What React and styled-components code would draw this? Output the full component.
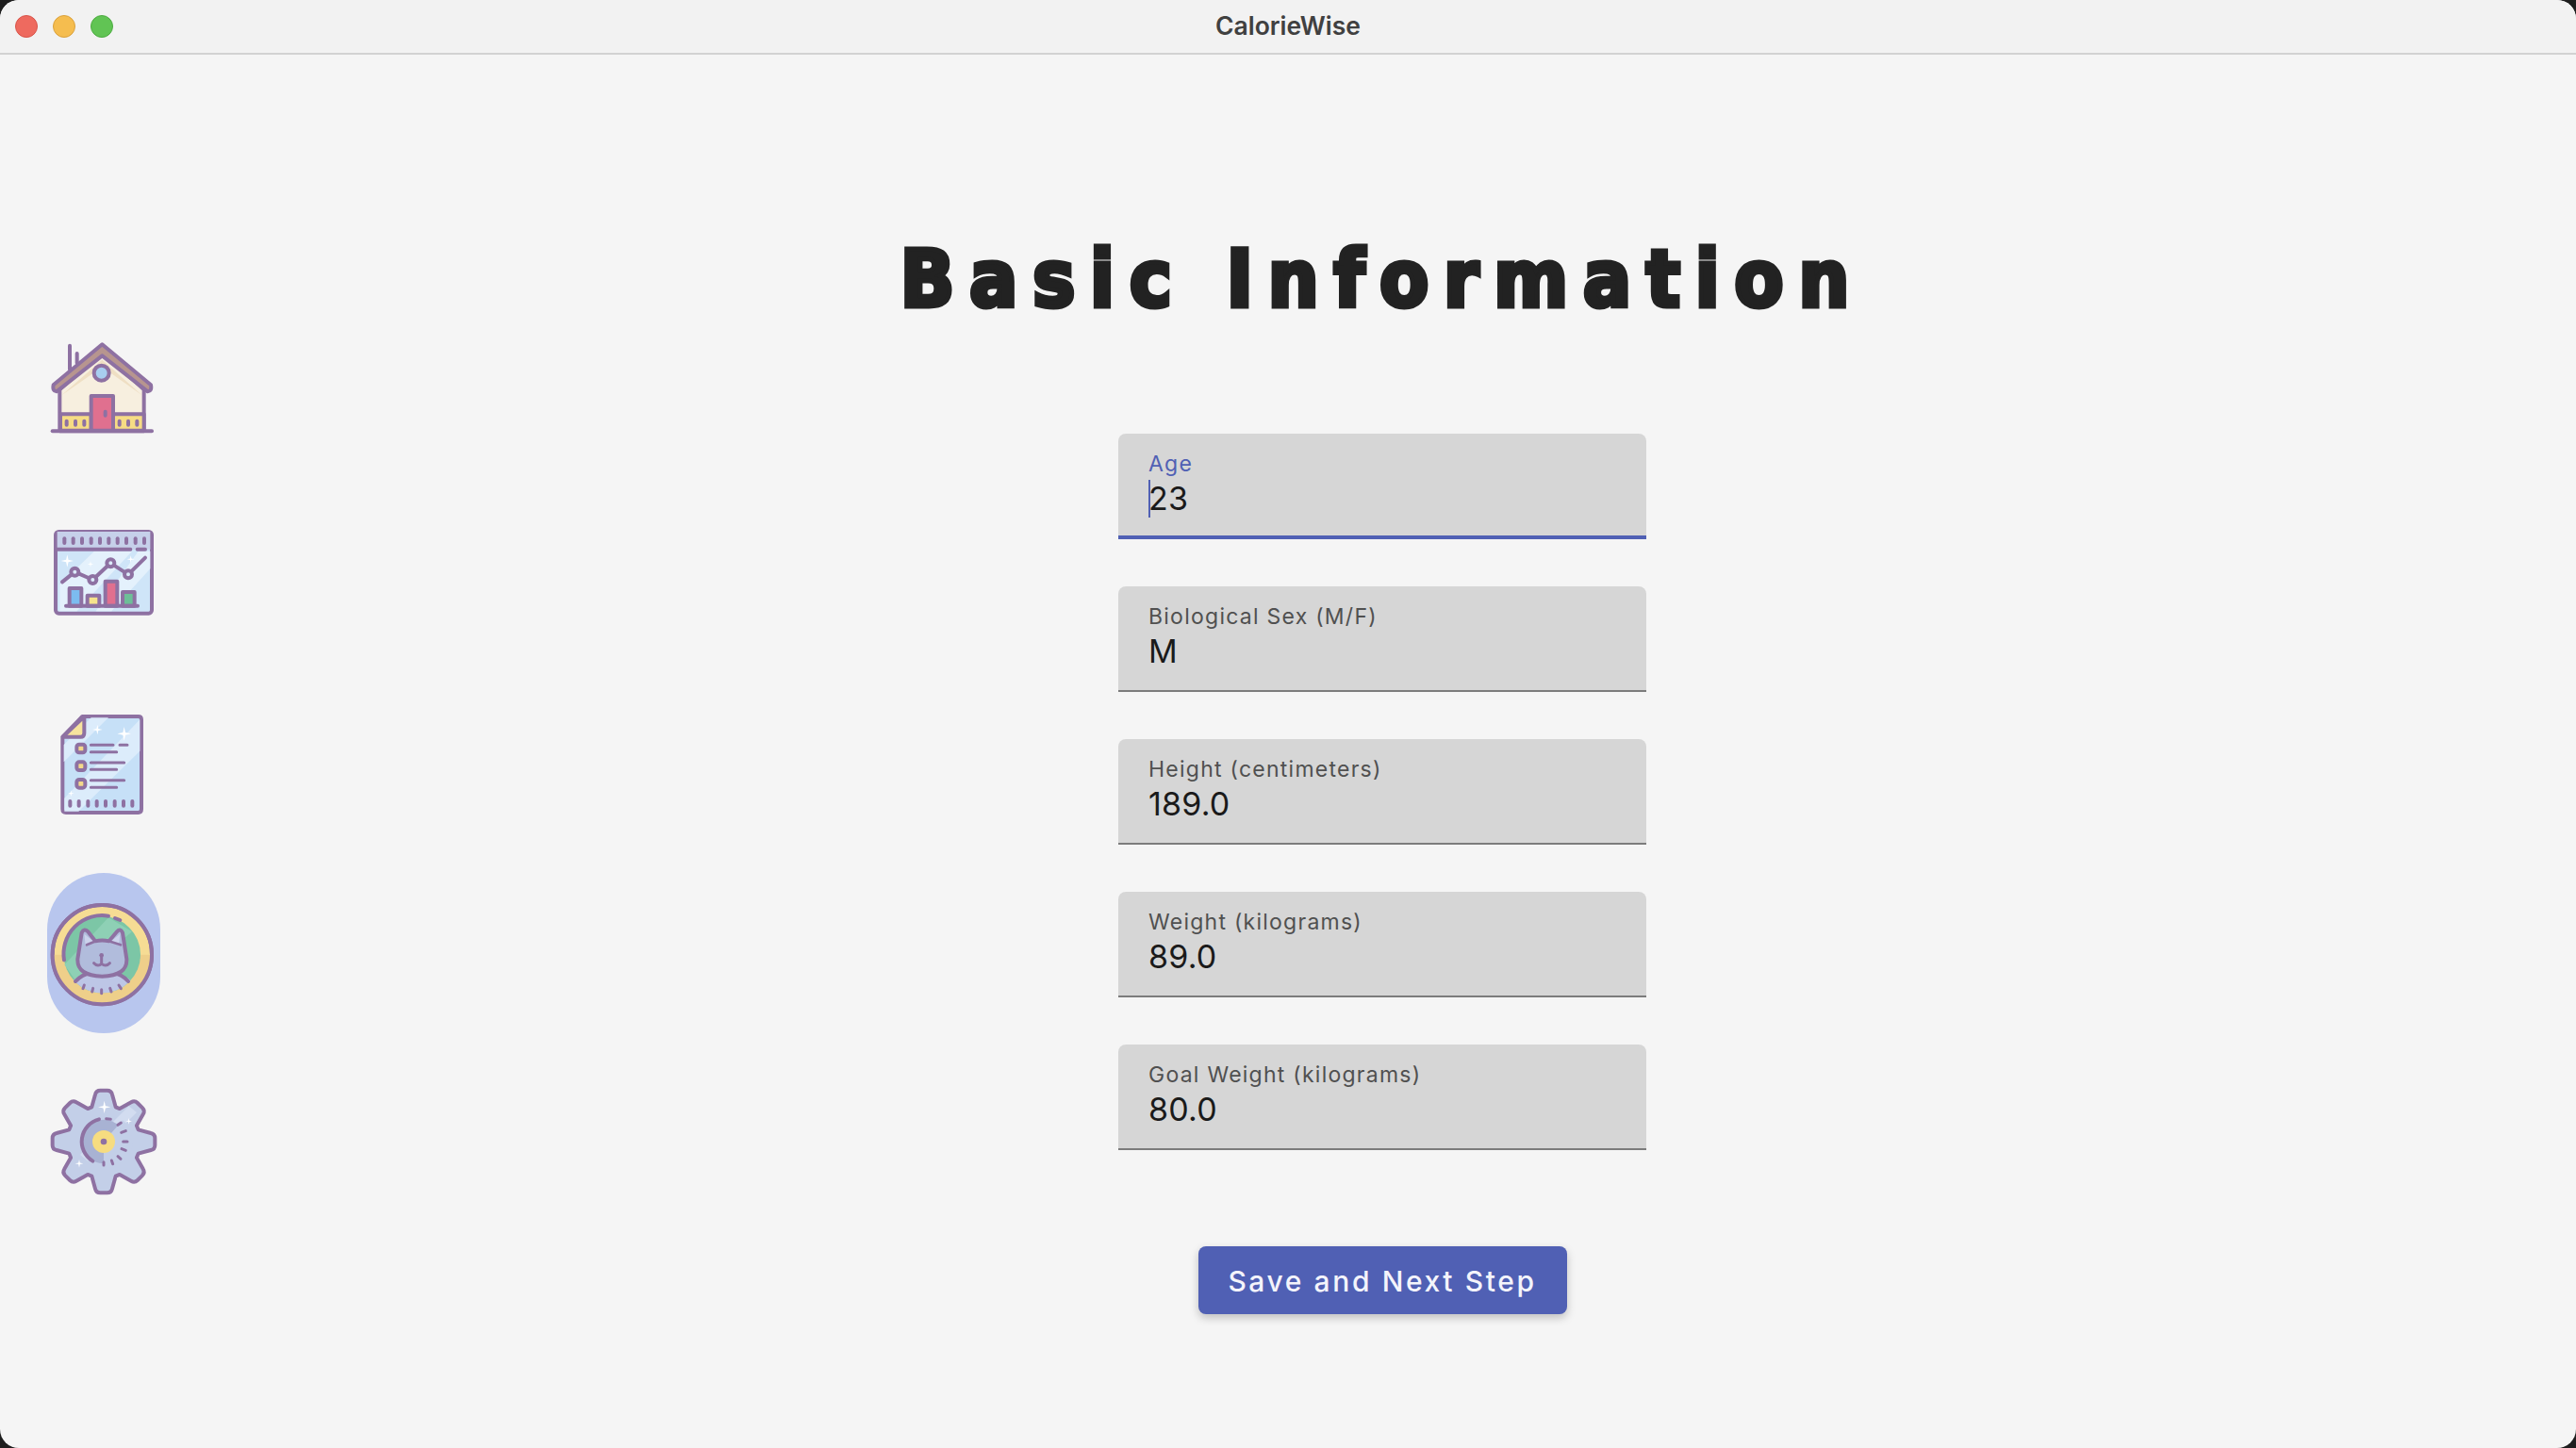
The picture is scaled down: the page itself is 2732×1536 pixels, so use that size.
import React from "react"
import styled, { createGlobalStyle } from "styled-components"

const Global = createGlobalStyle`
	html, body {
		margin: 0;
		padding: 0;
		background: #1e1e1e;
		overflow: hidden;
	}
`

const Window = styled.div`
	width: 2732px;
	height: 1536px;
	background: #f5f5f5;
	border-radius: 20px;
	overflow: hidden;
	display: flex;
	flex-direction: column;
	font-family: Inter, "Liberation Sans", sans-serif;
`

const TitleBar = styled.header`
	height: 53px;
	flex: none;
	padding-bottom: 3px;
	background: #f2f2f2;
	border-bottom: 2px solid #d2d2d2;
	display: flex;
	align-items: center;
	justify-content: center;
	position: relative;
	font-size: 26.5px;
	font-weight: 600;
	color: #404040;
`

const Lights = styled.div`
	position: absolute;
	left: 16px;
	top: 16px;
	display: flex;
	gap: 16px;
`

const Light = styled.span`
	width: 24px;
	height: 24px;
	border-radius: 50%;
	box-sizing: border-box;
	background: ${(p) => p.$color};
	border: 1px solid ${(p) => p.$edge};
`

const Body = styled.div`
	flex: 1;
	display: flex;
`

const Rail = styled.nav`
	width: 120px;
	margin: 0 30px 0 50px;
	padding-top: 268px;
	display: flex;
	flex-direction: column;
	gap: 30px;
`

const RailItem = styled.div`
	width: 120px;
	height: 170px;
	border-radius: 60px;
	display: flex;
	align-items: center;
	justify-content: center;
	background: ${(p) => (p.$active ? "#b8c6ee" : "transparent")};

	svg {
		filter: blur(0.7px);
	}
`

const Main = styled.main`
	flex: 1;
	display: flex;
	flex-direction: column;
	align-items: center;
`

const Title = styled.h1`
	margin: 188px 0 0;
	font-family: "DejaVu Sans Condensed", "DejaVu Sans", sans-serif;
	font-stretch: condensed;
	font-size: 84px;
	line-height: 100px;
	font-weight: 700;
	letter-spacing: 15.9px;
	white-space: nowrap;
	color: #222222;
	-webkit-text-stroke: 5px #222222;
`

const Form = styled.div`
	margin-top: 114px;
	display: flex;
	flex-direction: column;
	align-items: center;
	gap: 50px;
`

const Field = styled.div`
	width: 560px;
	height: 112px;
	box-sizing: border-box;
	padding: 18px 32px 0;
	background: #d6d6d6;
	border-radius: 8px 8px 0 0;
	border-bottom: ${(p) => (p.$focused ? "4px solid #5060b4" : "2px solid #7c7c7c")};
`

const Label = styled.div`
	font-size: 23px;
	line-height: 28px;
	letter-spacing: 1.25px;
	color: ${(p) => (p.$focused ? "#5060b4" : "#505050")};
`

const Value = styled.div`
	margin-top: 1px;
	font-size: 34px;
	line-height: 44px;
	letter-spacing: 0.2px;
	color: #1a1a1a;
`

const Caret = styled.span`
	display: inline-block;
	width: 2px;
	height: 40px;
	margin-right: -2px;
	vertical-align: -8px;
	background: #5060b4;
`

const SaveButton = styled.button`
	margin-top: 52px;
	width: 391px;
	height: 72px;
	padding: 2px 0 0;
	border: none;
	border-radius: 8px;
	background: #5060b4;
	color: #f4f4fb;
	font-family: Inter, "Liberation Sans", sans-serif;
	font-size: 30px;
	font-weight: 500;
	letter-spacing: 2.6px;
	box-shadow: 0 4px 10px rgba(0, 0, 0, 0.22);
`

const INK = "#8e71a2"

const Glyph = ({ box, children }) => (
	<svg
		width="120"
		height="120"
		viewBox={box}
		fill="none"
		stroke={INK}
		strokeWidth="12"
		strokeLinecap="round"
		strokeLinejoin="round"
	>
		{children}
	</svg>
)

const Sparkle = ({ x, y, r }) => {
	const k = r * 0.18
	return (
		<path
			d={`M${x},${y - r} L${x + k},${y - k} L${x + r},${y} L${x + k},${y + k} L${x},${y + r} L${x - k},${y + k} L${x - r},${y} L${x - k},${y - k} Z`}
			fill="#ffffff"
			stroke="none"
		/>
	)
}

const Ticks = ({ xs, y1, y2 }) => (
	<>
		{xs.map((x) => (
			<line key={x} x1={x} x2={x} y1={y1} y2={y2} />
		))}
	</>
)

const HouseIcon = () => (
	<Glyph box="150 33 360 360">
		<path d="M222,80 V155 M245,105 V135" />
		<path d="M190,220 L325,100 L458,220 V352 H190 Z" fill="#f7efdf" />
		<path d="M196,238 L325,125 L452,238 L325,148 Z" fill="#efdfc4" stroke="none" />
		<rect x="192" y="298" width="98" height="52" fill="#f6dc84" />
		<rect x="360" y="298" width="98" height="52" fill="#f6dc84" />
		<rect x="290" y="240" width="70" height="110" fill="#e0708f" />
		<line x1="335" x2="335" y1="290" y2="302" />
		<Ticks xs={[212, 240, 268, 380, 408, 436]} y1="320" y2="332" />
		<path
			d="M170,205 L325,76 L480,205 Q484,225 470,226 L325,112 L180,226 Q166,225 170,205 Z"
			fill="#b7958f"
		/>
		<circle cx="323" cy="167" r="24" fill="#a8cef0" />
		<line x1="167" x2="483" y1="352" y2="352" />
	</Glyph>
)

const ChartIcon = () => (
	<Glyph box="150 633 360 360">
		<rect x="177" y="672" width="306" height="260" rx="10" fill="#cfe5f8" />
		<path d="M182,728 H478 V672 H182 Z" fill="#c6d0ea" stroke="none" />
		<path d="M300,734 H420 L245,925 H190 V840 Z M440,734 H478 V790 L355,925 H305 Z" fill="#e4f1fc" stroke="none" />
		<Ticks xs={[205, 233, 261, 290, 318, 346, 374, 402, 431, 459]} y1="694" y2="708" />
		<path d="M180,728 H415 M437,728 H462" />
		<Sparkle x={214} y={765} r={20} />
		<Sparkle x={288} y={775} r={10} />
		<Sparkle x={416} y={760} r={12} />
		<path d="M198,832 L238,800 L295,825 L352,772 L408,808 L462,755" />
		<circle cx="238" cy="800" r="12" fill="#dcebfa" />
		<circle cx="295" cy="825" r="12" fill="#dcebfa" />
		<circle cx="352" cy="772" r="12" fill="#dcebfa" />
		<circle cx="408" cy="808" r="12" fill="#dcebfa" />
		<rect x="221" y="852" width="38" height="56" fill="#7cbcf0" />
		<rect x="278" y="875" width="38" height="33" fill="#f6e38c" />
		<rect x="335" y="830" width="38" height="78" fill="#e0708f" />
		<rect x="390" y="864" width="38" height="44" fill="#6dbf98" />
		<line x1="210" x2="438" y1="908" y2="908" />
	</Glyph>
)

const DocIcon = () => (
	<Glyph box="150 33 360 360">
		<path d="M199,125 L262,60 H440 Q450,60 450,70 V355 Q450,366 440,366 H210 Q199,366 199,355 Z" fill="#c6e0f7" />
		<path d="M290,64 H345 L203,205 V150 Z M445,70 V170 L250,362 H205 V320 Z" fill="#dcecfb" stroke="none" />
		<path d="M200,125 L268,60 V113 Q268,125 256,125 Z" fill="#f7e39e" />
		<Sparkle x={310} y={102} r={16} />
		<Sparkle x={395} y={115} r={22} />
		<Sparkle x={226} y={305} r={10} />
		<rect x="244" y="149" width="27" height="26" rx="8" fill="#f3d98a" />
		<rect x="244" y="205" width="27" height="26" rx="8" fill="#f3d98a" />
		<rect x="244" y="261" width="27" height="26" rx="8" fill="#f3d98a" />
		<path d="M289,151 H360 M381,151 H405 M289,173 H371 M289,207 H395 M289,229 H371 M289,263 H395 M289,286 H371" strokeWidth="9" />
		<Ticks xs={[223, 251, 280, 308, 336, 365, 393, 421]} y1="330" y2="344" />
	</Glyph>
)

const CatIcon = () => (
	<Glyph box="150 633 360 360">
		<defs>
			<clipPath id="badge">
				<circle cx="325" cy="818" r="122" />
			</clipPath>
		</defs>
		<circle cx="325" cy="818" r="158" fill="#f6dc94" />
		<path d="M167,818 H483 A158,158 0 0 1 167,818 Z" fill="#eecf8a" stroke="none" />
		<circle cx="325" cy="818" r="122" fill="#7cc6a6" stroke="none" />
		<path d="M345,700 L420,745 L240,900 L205,850 Z" fill="#8ed0b5" stroke="none" />
		<path d="M345,695 A122,122 0 0 0 204,835" />
		<path d="M366,702 L382,708" />
		<circle cx="325" cy="818" r="158" />
		<path d="M232,900 Q262,878 290,876 H360 Q388,878 416,900 V960 H232 Z" fill="#bdc6e6" stroke="none" clipPath="url(#badge)" />
		<path d="M240,903 Q262,880 290,876 M360,876 Q388,880 408,903" />
		<path
			d="M247,832 L260,748 Q267,733 280,745 L303,775 Q325,770 347,775 L372,745 Q383,733 390,748 L403,832 Q405,885 325,887 Q245,885 247,832 Z"
			fill="#b1bcdc"
		/>
		<path d="M268,752 L300,778 L272,788 Z M382,752 L350,778 L378,788 Z" fill="#ccd3ec" stroke="none" />
		<path d="M276,787 L305,775 M346,775 L384,787" strokeWidth="8" />
		<circle cx="323" cy="820" r="7" fill={INK} stroke="none" />
		<path d="M323,822 V845 M299,845 Q311,858 323,847 Q337,858 349,845" strokeWidth="9" />
		<path d="M268,915 L264,926 M296,925 L293,936 M323,929 V941 M350,925 L354,936 M378,915 L385,926" strokeWidth="9" />
	</Glyph>
)

// eight teeth, built from one tooth turned around the hub
const gearPath = () => {
	const turn = (u, v, a) => {
		const x = 240 + u * Math.cos(a) + v * Math.sin(a)
		const y = 243 + u * Math.sin(a) - v * Math.cos(a)
		return `${x.toFixed(1)},${y.toFixed(1)}`
	}
	let d = ""
	for (let i = 0; i < 8; i++) {
		const a = (i * Math.PI) / 4
		d += `${d ? "L" : "M"}${turn(-38, 110, a)} `
		d += `L${turn(-27, 150, a)} Q${turn(-24, 163, a)} ${turn(-11, 163, a)} `
		d += `L${turn(11, 163, a)} Q${turn(24, 163, a)} ${turn(27, 150, a)} `
		d += `L${turn(38, 110, a)} `
	}
	return d + "Z"
}

const GearIcon = () => (
	<Glyph box="60 63 360 360">
		<path d={gearPath()} fill="#c3cfe8" />
		<path d="M320,130 L345,150 L190,305 L165,285 Z" fill="#d2dcf0" stroke="none" />
		<Sparkle x={242} y={133} r={20} />
		<Sparkle x={320} y={178} r={10} />
		<Sparkle x={162} y={313} r={13} />
		<circle cx="240" cy="243" r="70" fill="#a8b2d3" stroke="none" />
		<path d="M300,175 A90,90 0 0 1 320,290 L240,318 L240,243 Z" fill="#c3cfe8" stroke="none" />
		<path d="M225,172 A73,73 0 0 0 205,305" />
		<path
			d="M248,170 L262,172 M285,190 L295,183 M296,214 L310,209 M302,243 L315,243 M297,266 L310,271 M285,290 L294,298 M265,303 L269,314 M240,308 V318"
			strokeWidth="9"
		/>
		<circle cx="240" cy="243" r="36" fill="#f6dc80" stroke="none" />
		<circle cx="240" cy="243" r="10" fill={INK} stroke="none" />
	</Glyph>
)

const NAV = [
	{ id: "home", Icon: HouseIcon },
	{ id: "stats", Icon: ChartIcon },
	{ id: "log", Icon: DocIcon },
	{ id: "profile", Icon: CatIcon, active: true },
	{ id: "settings", Icon: GearIcon },
]

const FIELDS = [
	{ label: "Age", value: "23", focused: true },
	{ label: "Biological Sex (M/F)", value: "M" },
	{ label: "Height (centimeters)", value: "189.0" },
	{ label: "Weight (kilograms)", value: "89.0" },
	{ label: "Goal Weight (kilograms)", value: "80.0" },
]

export default function App() {
	return (
		<>
			<Global />
			<Window>
				<TitleBar>
					<Lights>
						<Light $color="#ee6a5f" $edge="#d8544a" />
						<Light $color="#f5bd4f" $edge="#d9a03c" />
						<Light $color="#61c454" $edge="#4dab41" />
					</Lights>
					CalorieWise
				</TitleBar>
				<Body>
					<Rail>
						{NAV.map(({ id, Icon, active }) => (
							<RailItem key={id} $active={active}>
								<Icon />
							</RailItem>
						))}
					</Rail>
					<Main>
						<Title>Basic Information</Title>
						<Form>
							{FIELDS.map((f) => (
								<Field key={f.label} $focused={f.focused}>
									<Label $focused={f.focused}>{f.label}</Label>
									<Value>
										{f.focused && <Caret />}
										{f.value}
									</Value>
								</Field>
							))}
							<SaveButton>Save and Next Step</SaveButton>
						</Form>
					</Main>
				</Body>
			</Window>
		</>
	)
}
